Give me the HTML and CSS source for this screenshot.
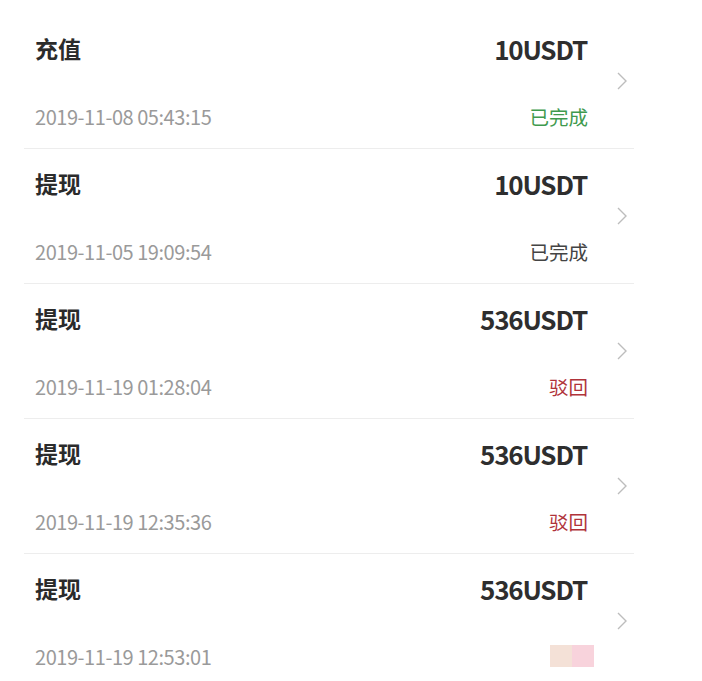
FILE: index.html
```html
<!DOCTYPE html>
<html lang="zh-CN">
<head>
<meta charset="utf-8">
<link rel="stylesheet" href="styles.css">
</head>
<body>
<ul class="list">
  <li class="row">
    <div class="main">
      <div class="line top"><span class="title">充值</span><span class="amount">10USDT</span></div>
      <div class="line bottom"><span class="date">2019-11-08 05:43:15</span><span class="status done">已完成</span></div>
    </div>
    <svg class="chev" viewBox="0 0 10 18" width="10" height="18"><path d="M1 1 L9 9 L1 17" fill="none" stroke="#bdbdbd" stroke-width="1.4"/></svg>
  </li>
  <li class="row">
    <div class="main">
      <div class="line top"><span class="title">提现</span><span class="amount">10USDT</span></div>
      <div class="line bottom"><span class="date">2019-11-05 19:09:54</span><span class="status plain">已完成</span></div>
    </div>
    <svg class="chev" viewBox="0 0 10 18" width="10" height="18"><path d="M1 1 L9 9 L1 17" fill="none" stroke="#bdbdbd" stroke-width="1.4"/></svg>
  </li>
  <li class="row">
    <div class="main">
      <div class="line top"><span class="title">提现</span><span class="amount">536USDT</span></div>
      <div class="line bottom"><span class="date">2019-11-19 01:28:04</span><span class="status reject">驳回</span></div>
    </div>
    <svg class="chev" viewBox="0 0 10 18" width="10" height="18"><path d="M1 1 L9 9 L1 17" fill="none" stroke="#bdbdbd" stroke-width="1.4"/></svg>
  </li>
  <li class="row">
    <div class="main">
      <div class="line top"><span class="title">提现</span><span class="amount">536USDT</span></div>
      <div class="line bottom"><span class="date">2019-11-19 12:35:36</span><span class="status reject">驳回</span></div>
    </div>
    <svg class="chev" viewBox="0 0 10 18" width="10" height="18"><path d="M1 1 L9 9 L1 17" fill="none" stroke="#bdbdbd" stroke-width="1.4"/></svg>
  </li>
  <li class="row last">
    <div class="main">
      <div class="line top"><span class="title">提现</span><span class="amount">536USDT</span></div>
      <div class="line bottom"><span class="date">2019-11-19 12:53:01</span><span class="status blur"><i class="b1"></i><i class="b2"></i></span></div>
    </div>
    <svg class="chev" viewBox="0 0 10 18" width="10" height="18"><path d="M1 1 L9 9 L1 17" fill="none" stroke="#bdbdbd" stroke-width="1.4"/></svg>
  </li>
</ul>
</body>
</html>
```
FILE: styles.css
```css
html, body {
  margin: 0;
  padding: 0;
  background: #fff;
  font-family: "Noto Sans CJK SC", "Noto Sans", sans-serif;
}
.list {
  list-style: none;
  margin: 0;
  padding: 14px 0 0 24px;
  width: 610px;
}
.row {
  display: flex;
  align-items: center;
  height: 134px;
  border-bottom: 1px solid #ededed;
  padding-left: 11px;
}
.row.last {
  border-bottom: none;
}
.main {
  flex: 1;
  display: flex;
  flex-direction: column;
  align-self: stretch;
  padding-top: 19px;
}
.line {
  display: flex;
  justify-content: space-between;
  align-items: center;
}
.line.top {
  height: 30px;
}
.line.bottom {
  height: 26px;
  margin-top: 40px;
}
.title {
  font-size: 23px;
  font-weight: 700;
  color: #2b2b2b;
}
.amount {
  font-size: 26px;
  font-weight: 700;
  color: #2e2e2e;
  letter-spacing: -1.2px;
  margin-right: 1px;
}
.date {
  font-size: 20px;
  color: #9a9a9a;
  letter-spacing: -0.45px;
}
.status {
  font-size: 19.5px;
}
.status.done { color: #3f9a4e; }
.status.plain { color: #444; }
.status.reject { color: #b0333a; }
.status.blur {
  display: flex;
  margin-right: -6px;
}
.blur i {
  display: block;
  width: 22px;
  height: 22px;
}
.blur .b1 { background: #f4e1d7; }
.blur .b2 { background: #f8d3dc; }
.chev {
  margin-left: 29px;
  margin-right: 7px;
  flex: none;
}
```
